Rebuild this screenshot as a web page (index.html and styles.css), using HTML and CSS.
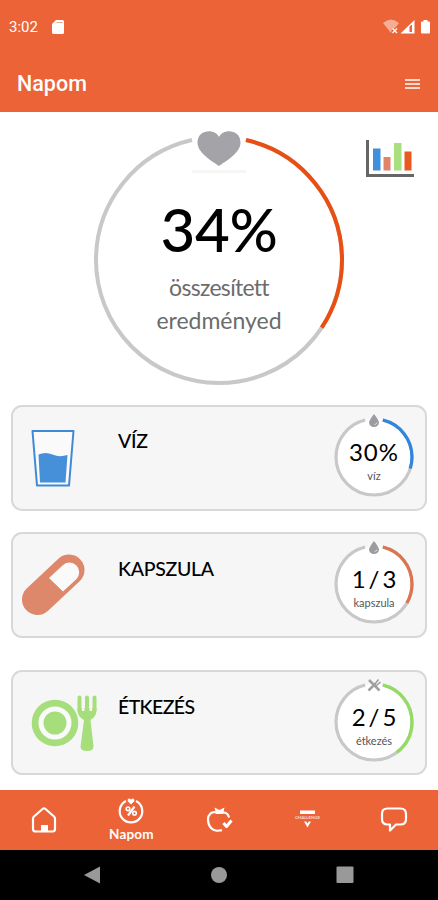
FILE: index.html
```html
<!DOCTYPE html>
<html lang="hu">
<head>
  <meta charset="UTF-8">
  <title>Napom</title>
  <meta name="viewport" content="width=device-width, initial-scale=1.0">
  <link rel="stylesheet" href="styles.css">
</head>
<body>
  <div class="app">
    <header>
      <div class="status-bar">
        <span class="time">3:02</span>
        <svg width="14" height="16" viewBox="0 0 14 16">
          <path d="M5 1h6.500a1.500 1.500 0 0 1 1.500 1.500v11a1.500 1.500 0 0 1-1.500 1.500h-9A1.500 1.500 0 0 1 1 13.500V5z" fill="#fff"/>
          <path d="M5.500 3.500h6" stroke="#f3a58a" stroke-width="1"/>
        </svg>
        <svg class="signals" width="48" height="16" viewBox="0 0 48 16">
          <path d="M0 4q8-7 16 0l-4 5-3 1-1 4z" fill="#f5ae94"/>
          <path d="M9.500 9.500l4.500 4.500m0-4.500L9.500 14" stroke="#fff" stroke-width="1.400"/>
          <path d="M17.500 14.500L31.500 1v13.500z" fill="#fff"/>
          <path d="M26.500 7.500l2.500-2v7.500h-2.500z" fill="#eb6337"/>
          <path d="M38 3.500q0-1 1-1h1.500V1h4v1.500H46q1 0 1 1v10q0 1-1 1h-7q-1 0-1-1z" fill="#fff"/>
        </svg>
      </div>
      <div class="title-bar">
        <h1>Napom</h1>
        <div class="menu"><i></i><i></i><i></i></div>
      </div>
    </header>

    <main>
      <section class="summary">
        <div class="ring ring-big">
          <svg viewBox="0 0 250 250">
            <circle class="track" cx="125" cy="125" r="123" pathLength="360" stroke-dasharray="0 12.700 334.600 20"/>
            <circle class="bar total" cx="125" cy="125" r="123" pathLength="360" stroke-dasharray="0 12.700 110.700 400"/>
            <path d="M98 36.500h54" stroke="#f6f6f6" stroke-width="3"/>
            <path d="M125 31C118 26 103.500 18 103.500 7.500C103.500-6 121-7 125 2C129-7 146.500-6 146.500 7.500C146.500 18 132 26 125 31z" fill="#a3a3a8"/>
          </svg>
          <div class="ring-text">
            <strong>34%</strong>
            <span>összesített</span>
            <span>eredményed</span>
          </div>
        </div>
        <svg class="chart" width="48" height="38" viewBox="0 0 48 38">
          <path d="M7 8.500h7.500v22H7z" fill="#3f8fdc"/>
          <path d="M17.500 17h7v13.500h-7z" fill="#e08368"/>
          <path d="M28 3h7.500v27.500H28z" fill="#a9df7e"/>
          <path d="M38.500 11.500h7v19h-7z" fill="#e85a22"/>
          <path d="M1.500 0v35.500H48" fill="none" stroke="#666" stroke-width="3"/>
        </svg>
      </section>

      <section class="card">
        <svg class="icon" viewBox="0 0 86 102">
          <path d="M20.500 24h41l-4.500 54.500H25z" fill="#fafafa" stroke="#3f8ad6" stroke-width="2" stroke-linejoin="round"/>
          <path d="M26.500 47.500q7-3 14 0t15 .5L53.500 75.500H28z" fill="#4690da"/>
        </svg>
        <h2 class="viz">VÍZ</h2>
        <div class="ring">
          <svg viewBox="0 0 80 80">
            <circle class="track" cx="40" cy="40" r="38" pathLength="360" stroke-dasharray="0 13.500 333 20"/>
            <circle class="bar water" cx="40" cy="40" r="38" pathLength="360" stroke-dasharray="0 13.500 94.200 400"/>
            <path class="drop" d="M40-3q5 6.500 5 8.500a5 4.500 0 0 1-10 0q0-2 5-8.500z"/>
            <path class="shine" d="M40.500 7.500q2 0 2.500-2"/>
          </svg>
          <div class="ring-text">
            <strong>30%</strong>
            <span>víz</span>
          </div>
        </div>
      </section>

      <section class="card">
        <svg class="icon" viewBox="0 0 86 102">
          <path d="M25.500 65.500L57 36" stroke="#de886b" stroke-width="31" stroke-linecap="round"/>
          <path d="M37 44L50.500 31.500a9.500 9.500 0 0 1 14 13.500L51 57.500z" fill="#fafafa"/>
        </svg>
        <h2 class="kapszula">KAPSZULA</h2>
        <div class="ring">
          <svg viewBox="0 0 80 80">
            <circle class="track" cx="40" cy="40" r="38" pathLength="360" stroke-dasharray="0 13.500 333 20"/>
            <circle class="bar capsule" cx="40" cy="40" r="38" pathLength="360" stroke-dasharray="0 13.500 106.500 400"/>
            <path class="drop" d="M40-3q5 6.500 5 8.500a5 4.500 0 0 1-10 0q0-2 5-8.500z"/>
            <path class="shine" d="M40.500 7.500q2 0 2.500-2"/>
          </svg>
          <div class="ring-text">
            <strong class="fraction">1/3</strong>
            <span>kapszula</span>
          </div>
        </div>
      </section>

      <section class="card meal-card">
        <svg class="icon" viewBox="0 0 86 102">
          <circle cx="43" cy="51" r="23.300" fill="#a6de7c"/>
          <circle cx="43" cy="51" r="14" fill="none" stroke="#fafafa" stroke-width="5"/>
          <path d="M67.500 25.500v12q0 5 7.500 5t7.500-5v-12M75 25.500v16" fill="none" stroke="#a6de7c" stroke-width="4" stroke-linecap="round"/>
          <path d="M65.500 36h19v3q-.5 6-6 9l3 26.500q0 4.500-6.500 4.500t-6.500-4.500l3.500-26.500q-6-3-6.500-9z" fill="#a6de7c"/>
          <path d="M71.200 24v15M78.800 24v15" stroke="#f6f6f6" stroke-width="2.500"/>
        </svg>
        <h2 class="etkezes">ÉTKEZÉS</h2>
        <div class="ring">
          <svg viewBox="0 0 80 80">
            <circle class="track" cx="40" cy="40" r="38" pathLength="360" stroke-dasharray="0 13.500 333 20"/>
            <circle class="bar meal" cx="40" cy="40" r="38" pathLength="360" stroke-dasharray="0 13.500 129.500 400"/>
            <path d="M35-2l10.500 10.500M34.500 8.500l7-7" stroke="#a0a0a0" stroke-width="2.500"/>
            <path d="M41 2l3.500-4.500M42 4l4.500-4" stroke="#a0a0a0" stroke-width="1.600"/>
          </svg>
          <div class="ring-text">
            <strong class="fraction">2/5</strong>
            <span>étkezés</span>
          </div>
        </div>
      </section>
    </main>

    <nav>
      <a>
        <svg width="28" height="28" viewBox="0 0 28 28">
          <path d="M3 12.500q0-1 1-2L12.500 3q1.500-1.300 3 0L24 10.500q1 1 1 2V23q0 2.500-2.500 2.500h-17Q3 25.500 3 23z"/>
          <path class="solid" d="M11 19h7v7h-7z"/>
        </svg>
      </a>
      <a class="active">
        <svg width="28" height="28" viewBox="0 0 28 28">
          <path d="M9 4A11.300 11.300 0 1 0 19 4"/>
          <path class="solid" d="M14 7.500L10.700 4.300q-.5-3 2-2.800L14 2.600l1.300-1.100q2.500-.2 2 2.800z"/>
          <path stroke-width="1.600" d="M17.500 9.500l-6.500 9"/>
          <circle cx="11" cy="11.800" r="1.800" stroke-width="1.600"/>
          <circle cx="17.500" cy="16.200" r="1.800" stroke-width="1.600"/>
        </svg>
        <span>Napom</span>
      </a>
      <a>
        <svg width="28" height="28" viewBox="0 0 28 28">
          <path d="M11.500 6.500C6.500 5 3 8.500 3 13.500C3 20 7.500 26 14 24.500q1.500-.3 3 0"/>
          <path d="M18 6.500q5 0 6 5"/>
          <path class="solid" d="M9.500 1.500l5 2.500L19.500 1.500l-1.500 6.500h-7z"/>
          <path class="check" d="M18.500 17l3 3.500 5-6"/>
        </svg>
      </a>
      <a>
        <svg class="challenge" width="28" height="28" viewBox="0 0 28 28">
          <path class="solid" d="M7 4.500h15v3.500H7zM11 15.500h2.200l1.300 2 1.300-2H18l-3.500 6z"/>
          <text x="2" y="13" textLength="25">CHALLENGE</text>
        </svg>
      </a>
      <a>
        <svg width="28" height="28" viewBox="0 0 28 28">
          <path d="M7.500 2.500h13q5.500 0 5.500 5.500v5q0 5.500-5.500 5.500H16l-6 6v-6H7.500Q2 18.500 2 13V8q0-5.500 5.500-5.500z"/>
        </svg>
      </a>
    </nav>

    <footer>
      <svg width="18" height="18" viewBox="0 0 18 18"><path d="M1 9L17 .5v17z"/></svg>
      <svg width="18" height="18" viewBox="0 0 18 18"><circle cx="9" cy="9" r="8"/></svg>
      <svg width="18" height="18" viewBox="0 0 18 18"><rect x=".5" y=".5" width="17" height="16.500" rx="1"/></svg>
    </footer>
  </div>
</body>
</html>
```

FILE: styles.css
```css
:root {
  --orange: #eb6337;
  --track: #c8c8c8;
  --card-bg: #f6f6f6;
  --card-border: #d8d8d8;
}
* {
  box-sizing: border-box;
}
body {
  margin: 0;
  background: #fff;
  font-family: Lato, sans-serif;
  color: #000;
}
h1, h2 {
  margin: 0;
}
svg {
  display: block;
  overflow: visible;
}
.app {
  display: flex;
  flex-direction: column;
  width: 438px;
  height: 900px;
  overflow: hidden;
}
header {
  height: 112px;
  background: var(--orange);
  color: #fff;
  font-family: Roboto, sans-serif;
}
.status-bar {
  display: flex;
  align-items: center;
  height: 55px;
  padding: 0 7px 1px 9px;
}
.time {
  width: 42px;
  font-size: 15px;
}
.signals {
  margin-left: auto;
}
.title-bar {
  display: flex;
  align-items: center;
  justify-content: space-between;
  height: 57px;
  padding: 0 18px 0 17px;
}
h1 {
  font-size: 21.500px;
  font-weight: 500;
}
.menu {
  display: grid;
  gap: 2px;
  width: 15px;
}
.menu i {
  height: 2px;
  background: #fbd9cd;
}
main {
  height: 678px;
  padding: 23px 11px 0;
}
.summary {
  display: flex;
  height: 270px;
  padding-left: 83px;
}
.chart {
  margin: 5px 0 0 22px;
}

/* progress rings */
.ring {
  display: grid;
  width: 80px;
  height: 80px;
}
.ring svg,
.ring-text {
  grid-area: 1 / 1;
}
.ring circle {
  fill: none;
  stroke-width: 3.200;
  transform: rotate(-90deg);
  transform-origin: center;
}
.ring .track {
  fill: #fff;
  stroke: var(--track);
}
.bar.total { stroke: #e94e12; }
.bar.water { stroke: #2f86dc; }
.bar.capsule { stroke: #dd7450; }
.bar.meal { stroke: #93dc62; }
.drop {
  fill: #9c9ca0;
}
.shine {
  fill: none;
  stroke: #d8d8d8;
}
.ring-text {
  display: flex;
  flex-direction: column;
  align-items: center;
  padding-top: 19px;
  white-space: nowrap;
}
.ring-text strong {
  font-size: 24px;
  line-height: 32px;
  font-weight: 400;
  letter-spacing: 1px;
}
.ring-text .fraction {
  letter-spacing: 3px;
  margin-right: -3px;
}
.ring-text span {
  margin-top: 1px;
  font-size: 11px;
  line-height: 14px;
  color: #555;
}
.ring-big {
  width: 250px;
  height: 250px;
}
.ring-big circle {
  stroke-width: 4;
}
.ring-big .ring-text {
  padding-top: 58px;
}
.ring-big strong {
  font-size: 60px;
  line-height: 72px;
  font-weight: 500;
  margin-bottom: 6px;
  letter-spacing: -.3px;
}
.ring-big span {
  margin: 0;
  font-size: 23px;
  line-height: 32.500px;
  color: #6c6c6c;
}
.ring-big strong + span {
  letter-spacing: -.7px;
}

.card {
  display: flex;
  height: 105.500px;
  margin-bottom: 21.500px;
  border: 2px solid var(--card-border);
  border-radius: 11px;
  background: var(--card-bg);
}
.meal-card {
  margin-top: 32px;
}
.icon {
  width: 86px;
  height: 102px;
  margin-left: -1px;
}
h2 {
  margin: 23px 0 0 20px;
  font-size: 19.500px;
  line-height: 24px;
  font-weight: 500;
}
.viz {
  margin-top: 22px;
  letter-spacing: -.3px;
}
.kapszula { letter-spacing: -.3px; }
.etkezes { letter-spacing: -.6px; }
.card .ring {
  margin: 10px 11px 0 auto;
}

nav {
  display: grid;
  grid-template-columns: repeat(5, 1fr);
  height: 60px;
  background: var(--orange);
}
nav a {
  display: flex;
  flex-direction: column;
  align-items: center;
  padding-top: 16px;
  color: #fff;
}
nav .active {
  padding-top: 7px;
}
nav span {
  margin-top: 1px;
  font-size: 13.500px;
  line-height: 16px;
  font-weight: 700;
  letter-spacing: .2px;
}
nav path,
nav circle {
  fill: none;
  stroke: #fff;
  stroke-width: 2.200;
  stroke-linejoin: round;
}
nav circle {
  stroke-width: 1.600;
}
nav .check {
  stroke-width: 3;
}
nav .solid {
  fill: #fff;
  stroke: none;
}
.challenge text {
  fill: #fbd9cd;
  font-size: 4.500px;
  font-weight: 700;
}
footer {
  display: flex;
  justify-content: space-between;
  height: 50px;
  padding: 16px 84px 0 83px;
  background: #000;
}
footer svg {
  fill: #999;
}
```
